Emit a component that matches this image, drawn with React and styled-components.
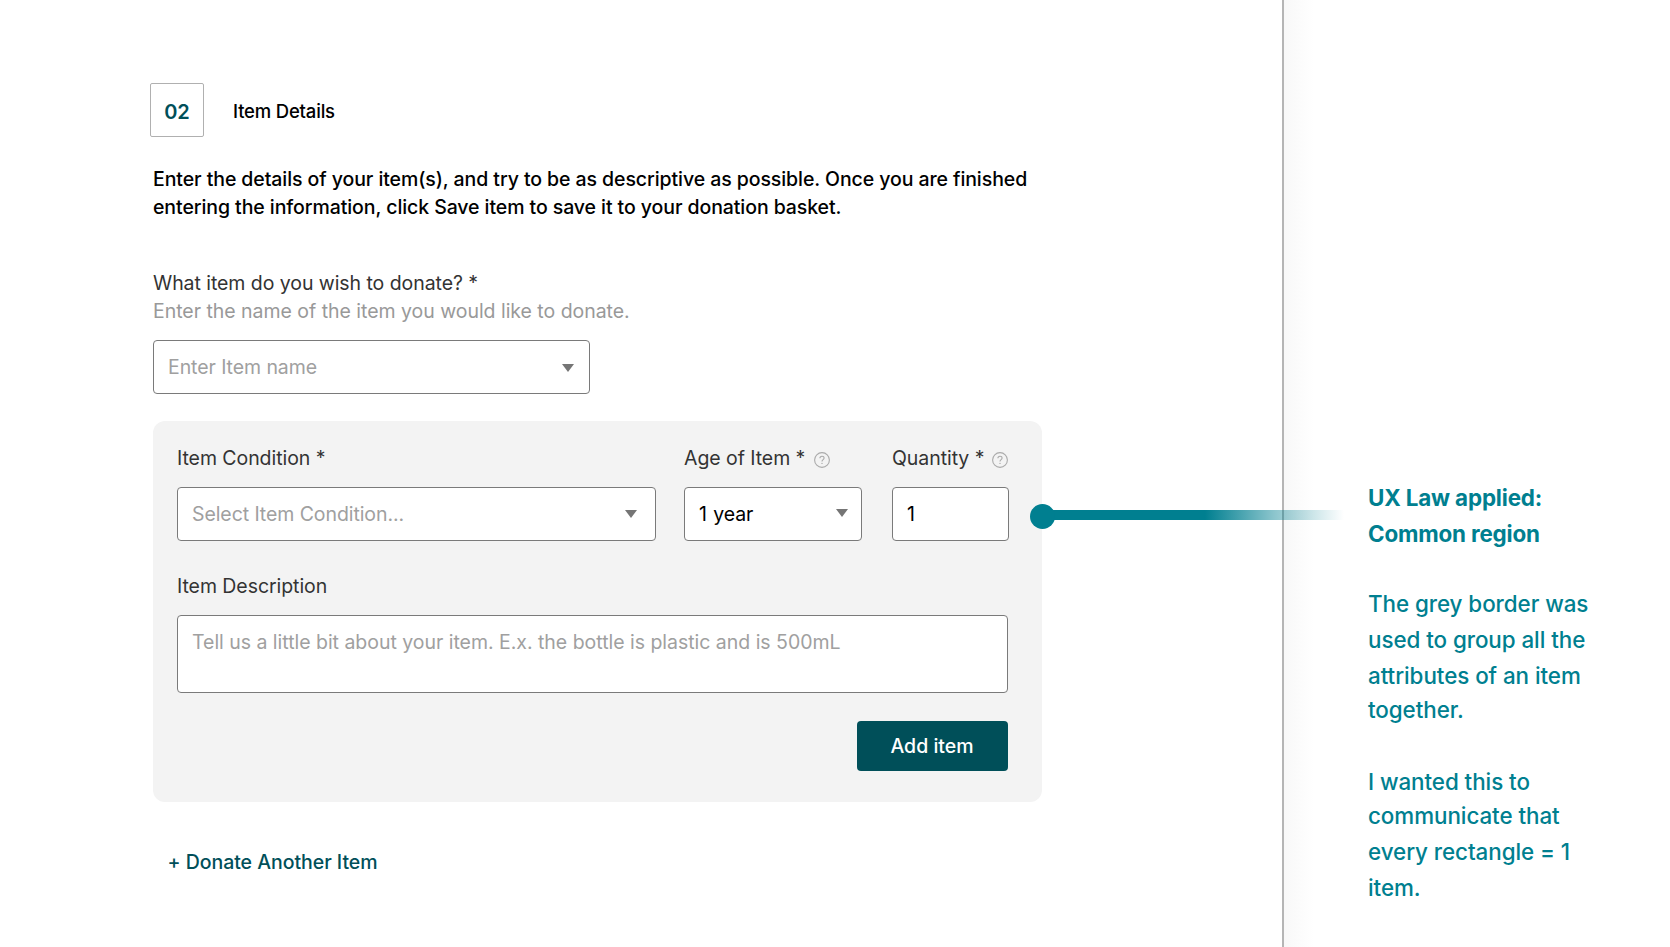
import React from "react";
import styled, { createGlobalStyle } from "styled-components";

const GlobalStyle = createGlobalStyle`
  *, *::before, *::after { box-sizing: border-box; }
  body { margin: 0; background: #fff; font-family: Inter, "Liberation Sans", sans-serif; }
  input, textarea, button { font-family: inherit; }
`;

const Page = styled.div`
  position: relative;
  display: flex;
  width: 1670px;
  height: 947px;
  overflow: hidden;
  background: #fff;
`;

const FormPane = styled.main`
  width: 1284px;
  height: 100%;
  padding: 83px 0 0 153px;
  border-right: 2px solid #b5b5b5;
`;

const Header = styled.header`
  display: flex;
  align-items: center;
  margin-left: -3px;
`;

const StepBadge = styled.div`
  display: flex;
  align-items: center;
  justify-content: center;
  width: 54px;
  height: 54px;
  margin-right: 29px;
  padding-top: 3px;
  border: 1px solid #b0b0b0;
  border-radius: 2px;
  color: #004f59;
  font-size: 20px;
  font-weight: 600;
`;

const Title = styled.h1`
  margin: 0;
  padding-top: 2px;
  font-size: 18.5px;
  font-weight: 500;
  letter-spacing: -0.18px;
`;

const Intro = styled.p`
  margin: 28px 0 0;
  font-size: 19.5px;
  line-height: 28px;
  font-weight: 500;
  letter-spacing: -0.08px;
  white-space: nowrap;
`;

const Text = styled.span`
  display: block;
  font-size: 19.5px;
  line-height: 28px;
  letter-spacing: ${(p) => (p.$muted ? "-0.03px" : "-0.06px")};
  color: ${(p) => (p.$muted ? "#999" : "#333")};
  white-space: nowrap;
`;

const ItemName = styled.section`
  margin-top: 48px;
`;

const Panel = styled.section`
  width: 888.5px;
  height: 381px;
  margin-top: 27px;
  padding: 23px 34px 0 24px;
  border-radius: 12px;
  background: #f3f3f3;
`;

const FieldRow = styled.div`
  display: flex;
`;

const Field = styled.div`
  flex: none;
  width: ${(p) => p.$width}px;
  margin-top: ${(p) => p.$top || 0}px;
  margin-right: ${(p) => p.$gap || 0}px;
`;

const LabelRow = styled.div`
  display: flex;
  align-items: center;
  gap: ${(p) => p.$gap || 0}px;
  height: 28px;
  margin-bottom: 15px;
  svg { margin-top: 4px; flex: none; }
`;

const Control = styled.div`
  display: flex;
  align-items: center;
  justify-content: space-between;
  width: ${(p) => p.$width || "100%"};
  height: 54px;
  margin-top: ${(p) => p.$top || 0}px;
  padding: 0 ${(p) => p.$right || 15}px 0 14px;
  border: 1px solid #7a7a7a;
  border-radius: 4px;
  background: #fff;
  font-size: 19.5px;
  letter-spacing: ${(p) => (p.$filled ? "-0.1px" : "-0.08px")};
  word-spacing: ${(p) => (p.$filled ? "1px" : "normal")};
  color: ${(p) => (p.$filled ? "#000" : "#a0a0a0")};
  white-space: nowrap;
`;

const Description = styled(Control)`
  height: 78px;
  align-items: flex-start;
  padding-top: 12px;
  line-height: 28px;
  letter-spacing: -0.025px;
`;

const AddButton = styled.button`
  display: block;
  width: 151px;
  height: 50px;
  margin: 28px 0 0 auto;
  padding: 0;
  border: 0;
  border-radius: 4px;
  background: #004f59;
  color: #fff;
  font-size: 19.5px;
  font-weight: 500;
`;

const AddLink = styled.a`
  display: block;
  margin: 46px 0 0 14.5px;
  color: #004f59;
  font-size: 19.5px;
  line-height: 28px;
  font-weight: 500;
  letter-spacing: -0.03px;
`;

const Notes = styled.aside`
  flex: 1;
  padding: 480px 0 0 84px;
  background: linear-gradient(to right, #f8f8f8, #fff 30px);
  color: #007f90;
  font-size: 22.4px;
  line-height: 36px;
  font-weight: 500;
  letter-spacing: -0.06px;
  white-space: nowrap;
  p { margin: 0 0 36px; }
`;

const NoteTitle = styled.p`
  font-weight: 700;
  letter-spacing: -0.16px;
  && { margin-bottom: 34px; }
`;

const NoteLine = styled.span`
  display: block;
  height: ${(p) => p.$height || 36}px;
`;

const Connector = styled.div`
  position: absolute;
  left: 1042px;
  top: 510px;
  width: 302px;
  height: 10px;
  background: linear-gradient(to right, #007f90 54%, rgba(0, 127, 144, 0.45) 77%, rgba(0, 127, 144, 0) 100%);
  &::before {
    content: "";
    position: absolute;
    left: -12px;
    top: -6px;
    width: 25px;
    height: 25px;
    border-radius: 50%;
    background: #007f90;
  }
`;

const CaretShape = styled.svg`
  flex: none;
  margin-top: ${(p) => p.$shift || 0}px;
`;

const Caret = ({ shift }) => (
  <CaretShape width="12" height="8" viewBox="0 0 12 8" $shift={shift}>
    <path d="M0 0H12L6 8Z" fill="#757575" />
  </CaretShape>
);

const Help = () => (
  <svg width="16" height="16" viewBox="0 0 16 16" fill="none" stroke="#aaa" strokeWidth="1.1">
    <circle cx="8" cy="8" r="7.4" />
    <path d="M5.9 6.3C5.9 5 6.8 4.2 8 4.2s2.1.8 2.1 1.9C10.1 7.6 8 7.7 8 9.5" />
    <circle cx="8" cy="11.4" r=".7" fill="#aaa" stroke="none" />
  </svg>
);

export default function App() {
  return (
    <Page>
      <GlobalStyle />
      <FormPane>
        <Header>
          <StepBadge>02</StepBadge>
          <Title>Item Details</Title>
        </Header>
        <Intro>
          Enter the details of your item(s), and try to be as descriptive as possible. Once you are finished
          <br />
          entering the information, click Save item to save it to your donation basket.
        </Intro>
        <ItemName>
          <Text>What item do you wish to donate? *</Text>
          <Text $muted>Enter the name of the item you would like to donate.</Text>
          <Control $width="437px" $top={15}>
            <span>Enter Item name</span>
            <Caret shift={2} />
          </Control>
        </ItemName>
        <Panel>
          <FieldRow>
            <Field $width={479} $gap={28}>
              <LabelRow><Text>Item Condition *</Text></LabelRow>
              <Control $right={18}>
                <span>Select Item Condition...</span>
                <Caret />
              </Control>
            </Field>
            <Field $width={177.5} $gap={30.5}>
              <LabelRow $gap={9}><Text>Age of Item *</Text><Help /></LabelRow>
              <Control $filled $right={13}>
                <span>1 year</span>
                <Caret shift={-2} />
              </Control>
            </Field>
            <Field $width={116.5}>
              <LabelRow $gap={8}><Text>Quantity *</Text><Help /></LabelRow>
              <Control $filled><span>1</span></Control>
            </Field>
          </FieldRow>
          <Field $width={830.5} $top={31}>
            <LabelRow><Text>Item Description</Text></LabelRow>
            <Description>
              <span>Tell us a little bit about your item. E.x. the bottle is plastic and is 500mL</span>
            </Description>
          </Field>
          <AddButton>Add item</AddButton>
        </Panel>
        <AddLink>+ Donate Another Item</AddLink>
      </FormPane>
      <Notes>
        <NoteTitle>
          <NoteLine>UX Law applied:</NoteLine>
          <NoteLine>Common region</NoteLine>
        </NoteTitle>
        <p>
          <NoteLine>The grey border was</NoteLine>
          <NoteLine>used to group all the</NoteLine>
          <NoteLine $height={34}>attributes of an item</NoteLine>
          <NoteLine>together.</NoteLine>
        </p>
        <p>
          <NoteLine $height={34}>I wanted this to</NoteLine>
          <NoteLine>communicate that</NoteLine>
          <NoteLine>every rectangle = 1</NoteLine>
          <NoteLine>item.</NoteLine>
        </p>
      </Notes>
      <Connector />
    </Page>
  );
}
